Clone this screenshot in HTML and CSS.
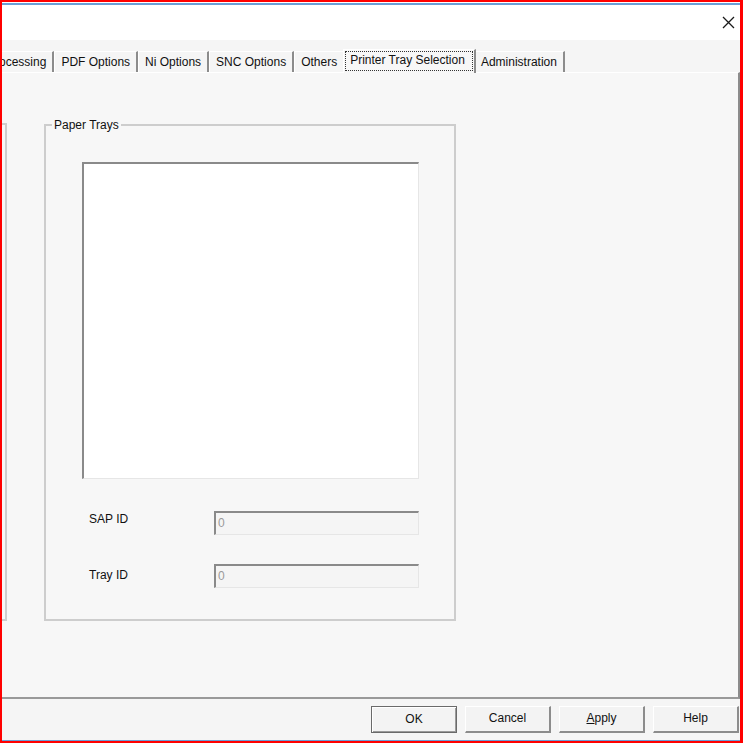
FILE: index.html
```html
<!DOCTYPE html>
<html>
<head>
<meta charset="utf-8">
<link rel="stylesheet" href="styles.css">
</head>
<body>
<div class="frame">
  <div class="titlebar">
    <svg class="close" width="13" height="13" viewBox="0 0 13 13"><path d="M1 1 L12 12 M12 1 L1 12" stroke="#1a1a1a" stroke-width="1.3" fill="none"/></svg>
  </div>
  <div class="body">
    <div class="tabs">
      <div class="tab">Processing</div>
      <div class="tab">PDF Options</div>
      <div class="tab">Ni Options</div>
      <div class="tab">SNC Options</div>
      <div class="tab">Others</div>
      <div class="tab active"><span class="focus">Printer Tray Selection</span></div>
      <div class="tab">Administration</div>
    </div>
    <div class="panel">
      <div class="group left-group"></div>
      <div class="group trays">
        <span class="legend">Paper Trays</span>
        <div class="listbox"></div>
        <div class="fields">
          <span class="label">SAP ID</span><div class="input">0</div>
          <span class="label label-low">Tray ID</span><div class="input">0</div>
        </div>
      </div>
    </div>
    <div class="buttons">
      <div class="btn default">OK</div>
      <div class="btn">Cancel</div>
      <div class="btn"><u>A</u>pply</div>
      <div class="btn">Help</div>
    </div>
  </div>
</div>
</body>
</html>
```
FILE: styles.css
```css
html, body {
  margin: 0;
  padding: 0;
  background: #ffffff;
}
.frame {
  width: 743px;
  height: 743px;
  box-sizing: border-box;
  border: 2px solid #ff0000;
  border-right-width: 3px;
  padding-top: 1px;
  background: #ffffff;
  display: flex;
  flex-direction: column;
  overflow: hidden;
  font-family: "Liberation Sans", Arial, sans-serif;
  font-size: 12px;
  color: #111111;
}
.titlebar {
  height: 35px;
  flex: none;
  border-top: 2px solid #6a9fd6;
  background: #ffffff;
  display: flex;
  align-items: center;
  justify-content: flex-end;
  padding-right: 5px;
}
.body {
  flex: 1;
  background: #f5f5f5;
  border-bottom: 1px solid #6a9fd6;
  display: flex;
  flex-direction: column;
  padding-top: 9px;
  min-height: 0;
}
.tabs {
  display: flex;
  align-items: flex-start;
  height: 23px;
  margin-left: -22px;
  flex: none;
}
.tab {
  box-sizing: border-box;
  height: 21px;
  margin-top: 2px;
  padding: 0 6px;
  line-height: 20px;
  border-top: 1px solid #ffffff;
  border-left: 1px solid #ffffff;
  border-right: 2px solid #8c8c8c;
  white-space: nowrap;
  background: #f5f5f5;
}
.tab.active {
  height: 24px;
  margin: 0 -2px -1px -2px;
  padding: 1px 1px 0 1px;
  position: relative;
  z-index: 1;
  background: #f7f7f7;
}
.focus {
  display: block;
  height: 18px;
  line-height: 17px;
  padding: 0 7px 0 4px;
  border: 1px dotted #333333;
}
.panel {
  flex: 1;
  box-sizing: border-box;
  border-top: 1px solid #ffffff;
  border-right: 2px solid #8c8c8c;
  border-bottom: 2px solid #9a9a9a;
  background: #f7f7f7;
  display: flex;
  align-items: flex-start;
  padding-top: 51px;
}
.group {
  box-sizing: border-box;
  height: 497px;
  border: 2px solid #cdcdcd;
}
.left-group {
  width: 50px;
  margin-left: -45px;
  margin-top: -1px;
  height: 498px;
}
.trays {
  width: 412px;
  margin-left: 37px;
  display: flex;
  flex-direction: column;
  align-items: flex-start;
}
.legend {
  height: 14px;
  line-height: 14px;
  margin: -8px 0 0 6px;
  padding: 0 2px;
  background: #f7f7f7;
}
.listbox {
  box-sizing: border-box;
  width: 337px;
  height: 317px;
  margin: 30px 0 0 36px;
  background: #ffffff;
  border-top: 2px solid #8a8a8a;
  border-left: 2px solid #8a8a8a;
  border-right: 1px solid #e6e6e6;
  border-bottom: 1px solid #e6e6e6;
}
.fields {
  display: grid;
  grid-template-columns: 125px 205px;
  row-gap: 29px;
  margin: 32px 0 0 43px;
}
.label {
  padding-top: 1px;
  line-height: 14px;
}
.label-low {
  padding-top: 4px;
}
.input {
  box-sizing: border-box;
  height: 24px;
  padding-left: 2px;
  line-height: 20px;
  color: #9a9a9a;
  background: #f5f5f5;
  border-top: 2px solid #8a8a8a;
  border-left: 2px solid #8a8a8a;
  border-right: 1px solid #e6e6e6;
  border-bottom: 1px solid #e6e6e6;
}
.buttons {
  flex: none;
  display: flex;
  justify-content: flex-end;
  gap: 8px;
  margin: 7px 0 7px 0;
  padding-right: 1px;
}
.btn {
  box-sizing: border-box;
  width: 86px;
  height: 27px;
  line-height: 23px;
  text-align: center;
  background: #f3f3f3;
  border-top: 1px solid #ffffff;
  border-left: 1px solid #ffffff;
  border-right: 2px solid #8c8c8c;
  border-bottom: 2px solid #8c8c8c;
}
.btn.default {
  border: 1px solid #6a6a6a;
  box-shadow: inset 1px 1px 0 #ffffff, inset -1px -1px 0 #9a9a9a;
  line-height: 24px;
}
```
